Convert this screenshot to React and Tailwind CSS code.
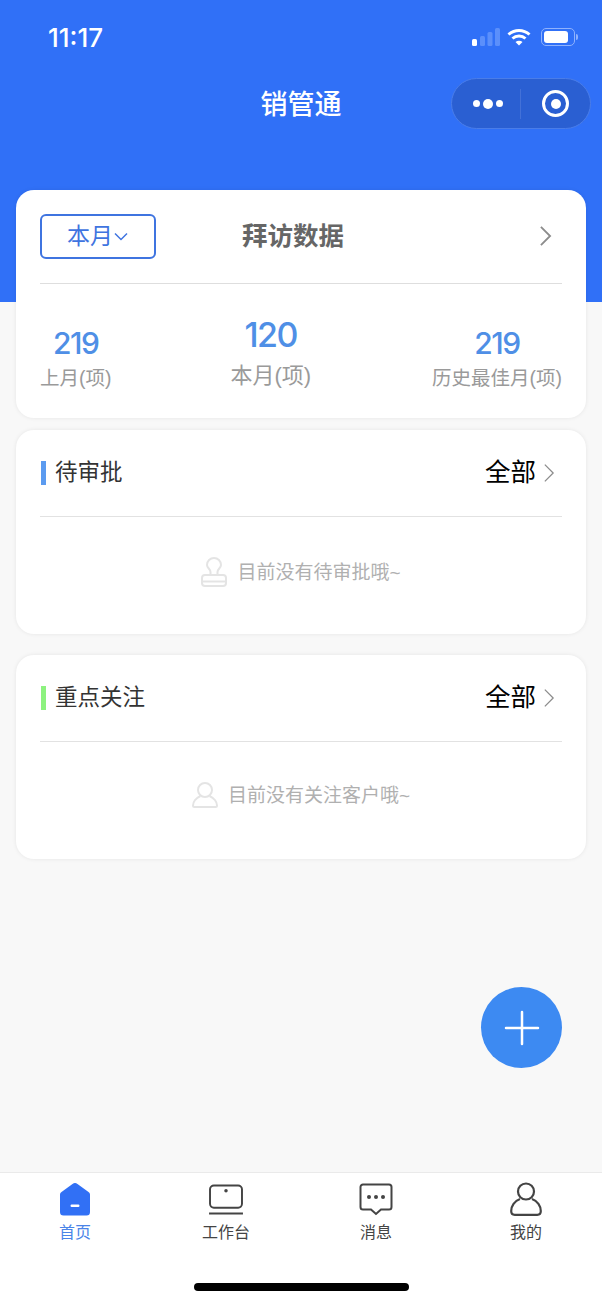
import React from "react";

const font = { fontFamily: '"Liberation Sans", "Noto Sans CJK SC", sans-serif' };

function Chevron({ className, thin }) {
  return (
    <svg viewBox="0 0 14 24" className={className} fill="none" stroke="currentColor" strokeWidth={thin ? 1.5 : 2}>
      <path d="M2 2l10 10L2 22" />
    </svg>
  );
}

function StatusBar() {
  return (
    <div className="flex h-[74px] items-center justify-between pl-[48px] pr-[24px] text-white">
      <span className="mt-[1px] font-['Inter'] text-[26px] leading-none font-medium">11:17</span>
      <div className="flex items-center gap-[7px]">
        <svg width="28" height="18" viewBox="0 0 28 18">
          <rect x="0" y="11" width="5" height="7" rx="1.5" fill="#fff" />
          <rect x="8" y="8" width="5" height="10" rx="1.5" fill="#5b8ffb" />
          <rect x="15.5" y="4" width="5" height="14" rx="1.5" fill="#5b8ffb" />
          <rect x="23" y="0" width="5" height="18" rx="1.5" fill="#5b8ffb" />
        </svg>
        <svg width="24" height="18" viewBox="0 0 24 18" className="mr-[3px]" fill="none" stroke="#fff" strokeWidth="3">
          <path d="M1.5 6.5C7.5 1 16.5 1 22.5 6.5" />
          <path d="M5.5 10.5c3.7-3.3 9.3-3.3 13 0" />
          <path d="M12 17.5l-3.5-3.6c2-1.6 5-1.6 7 0z" fill="#fff" stroke="none" />
        </svg>
        <div className="flex items-center">
          <div className="flex h-[18px] w-[34px] items-center rounded-[5px] border border-[#8fb2fd] p-[2px]">
            <div className="h-full w-[24px] rounded-[3px] bg-white" />
          </div>
          <div className="ml-[1px] h-[6px] w-[2px] rounded-r-full bg-[#8fb2fd]" />
        </div>
      </div>
    </div>
  );
}

function NavBar() {
  return (
    <div className="relative flex h-[60px] items-center justify-center">
      <span className="mt-[2px] text-[27px] leading-none font-medium text-white">销管通</span>
      <div className="absolute top-[4px] right-[11px] flex h-[51px] w-[140px] items-center rounded-full border border-[#4a7de8] bg-[#2a5fd2]">
        <div className="flex flex-1 items-center justify-center gap-[3px] pl-[3px]">
          <span className="h-[7px] w-[7px] rounded-full bg-white" />
          <span className="h-[10px] w-[10px] rounded-full bg-white" />
          <span className="h-[7px] w-[7px] rounded-full bg-white" />
        </div>
        <div className="h-[30px] w-px bg-[#4371d8]" />
        <div className="flex w-[69px] items-center justify-center">
          <div className="flex h-[27px] w-[27px] items-center justify-center rounded-full border-[3px] border-white">
            <span className="h-[10px] w-[10px] rounded-full bg-white" />
          </div>
        </div>
      </div>
    </div>
  );
}

function Stat({ value, label, big }) {
  return (
    <div className={`flex flex-col items-center ${big ? "-mt-[11px]" : "-mt-[1px]"}`}>
      <span className={`${big ? "text-[34px] leading-[40px]" : "text-[30px] leading-[36px]"} font-['Inter'] font-medium tracking-[-1.5px] text-[#4f8fe6]`}>{value}</span>
      <span className={`${big ? "mt-[7px] text-[22px]" : "mt-[3px] text-[19.500px]"} leading-[28px] text-[#9a9a9a]`}>{label}</span>
    </div>
  );
}

function VisitCard() {
  return (
    <div className="h-[228px] rounded-[18px] bg-white px-[24px] shadow-[0_0_4px_rgba(0,0,0,0.08)]">
      <div className="flex h-[94px] items-center border-b border-[#dedede] pb-[1px]">
        <div className="flex h-[45px] w-[116px] items-center justify-center gap-[1px] rounded-[6px] border-2 border-[#3f74e0] pr-[1px] text-[#3f74e0]">
          <span className="mt-[1px] text-[23px] leading-none">本月</span>
          <svg width="14" height="9" viewBox="0 0 14 9" fill="none" stroke="currentColor" strokeWidth="1.5" className="mt-[1px]">
            <path d="M1 1.5l6 6 6-6" />
          </svg>
        </div>
        <span className="mt-[1px] ml-[86px] flex-1 text-[25.500px] leading-none font-bold text-[#666666]">拜访数据</span>
        <Chevron className="mr-[10px] h-[22px] w-[13px] text-[#8c8c8c]" />
      </div>
      <div className="flex items-start justify-between pt-[42px]">
        <Stat value="219" label="上月(项)" />
        <div className="ml-[-2px]"><Stat value="120" label="本月(项)" big /></div>
        <Stat value="219" label="历史最佳月(项)" />
      </div>
    </div>
  );
}

function StampIcon() {
  return (
    <svg width="26" height="30" viewBox="0 0 26 30" fill="none" stroke="#e4e4e4" strokeWidth="2">
      <path d="M9.500 18v-3C9.500 12 6 11 6 8a7 7 0 0 1 14 0c0 3-3.500 4-3.500 7v3" />
      <rect x="1" y="18" width="24" height="11" rx="3" />
      <path d="M1 24.500h24" />
    </svg>
  );
}

function PersonIcon() {
  return (
    <svg width="26" height="26" viewBox="0 0 26 26" fill="none" stroke="#e4e4e4" strokeWidth="2">
      <circle cx="13" cy="8" r="7" />
      <path d="M8.500 14C4 16 1 20 1 23.500c0 1 .5 1.500 1.500 1.500h21c1 0 1.500-.5 1.500-1.500 0-3.500-3-7.500-7.500-9.500" />
    </svg>
  );
}

function ListCard({ title, barColor, icon, empty, className }) {
  return (
    <div className={`h-[204px] rounded-[18px] bg-white px-[24px] shadow-[0_0_4px_rgba(0,0,0,0.08)] ${className}`}>
      <div className="flex h-[87px] items-center justify-between border-b border-[#e2e2e2]">
        <div className="flex items-center">
          <span className={`ml-[1px] h-[24px] w-[5px] ${barColor}`} />
          <span className="mt-[1px] ml-[9px] text-[22.500px] leading-none text-[#333333]">{title}</span>
        </div>
        <div className="flex items-center">
          <span className="text-[25.500px] leading-none text-black">全部</span>
          <Chevron thin className="mr-[7px] ml-[7px] h-[20px] w-[12px] text-[#8c8c8c]" />
        </div>
      </div>
      <div className="flex items-center justify-center gap-[10px] pt-[40px]">
        {icon}
        <span className="text-[19px] leading-none text-[#b0b0b0]">{empty}</span>
      </div>
    </div>
  );
}

function TabItem({ icon, label, active, className }) {
  return (
    <div className={`flex w-[150px] flex-col items-center ${className || ""}`}>
      <div className="flex h-[33px] items-end">{icon}</div>
      <span className={`mt-[7px] text-[16px] leading-[20px] ${active ? "text-[#4a84e8]" : "text-[#444444]"}`}>{label}</span>
    </div>
  );
}

function TabBar() {
  return (
    <div className="h-[132px] border-t border-[#eaeaea] bg-white">
      <div className="flex justify-center pt-[10px]">
        <TabItem
          active
          className="-translate-x-px"
          label="首页"
          icon={
            <svg width="30" height="33" viewBox="0 0 30 33">
              <path d="M12.500 1a4 4 0 0 1 5 0l11 8a3 3 0 0 1 1.500 2.500V29a3.500 3.500 0 0 1-3.500 3.500h-23A3.500 3.500 0 0 1 0 29V11.500A3 3 0 0 1 1.500 9z" fill="#3170f5" />
              <rect x="10.500" y="21.500" width="9" height="2.500" rx="1.200" fill="#fff" />
            </svg>
          }
        />
        <TabItem
          label="工作台"
          icon={
            <svg width="36" height="31" viewBox="0 0 36 32" fill="none" stroke="#444" strokeWidth="2" className="mb-[1px]">
              <rect x="1.500" y="1.500" width="33" height="23" rx="4" />
              <path d="M0.500 30.500h35" />
              <circle cx="18" cy="7" r="1.800" fill="#444" stroke="none" />
            </svg>
          }
        />
        <TabItem
          label="消息"
          icon={
            <svg width="34" height="33" viewBox="0 0 34 33" fill="none" stroke="#444" strokeWidth="2">
              <path d="M4 1.500h26a2.500 2.500 0 0 1 2.500 2.500v20a2.500 2.500 0 0 1-2.500 2.500h-8l-5 4.500-5-4.500H4A2.500 2.500 0 0 1 1.500 24V4A2.500 2.500 0 0 1 4 1.500z" />
              <circle cx="10" cy="14" r="2" fill="#444" stroke="none" />
              <circle cx="17" cy="14" r="2" fill="#444" stroke="none" />
              <circle cx="24" cy="14" r="2" fill="#444" stroke="none" />
            </svg>
          }
        />
        <TabItem
          label="我的"
          icon={
            <svg width="32" height="34" viewBox="0 0 32 34" fill="none" stroke="#444" strokeWidth="2.200">
              <circle cx="16" cy="9.500" r="8" />
              <path d="M10 17C4.500 19 1.200 24 1.200 29c0 2.500 1.300 3.800 3.500 3.800h22.600c2.200 0 3.500-1.300 3.500-3.800 0-5-3.300-10-8.800-12" />
            </svg>
          }
        />
      </div>
      <div className="mx-auto mt-[40px] h-[8px] w-[215px] rounded-full bg-black" />
    </div>
  );
}

export default function App() {
  return (
    <div style={font} className="relative flex min-h-[1304px] flex-col bg-[#f8f8f8]">
      <div className="h-[302px] bg-[#3070f7]">
        <StatusBar />
        <NavBar />
      </div>
      <div className="-mt-[112px] flex-1 px-[16px]">
        <VisitCard />
        <ListCard
          className="mt-[12px]"
          title="待审批"
          barColor="bg-[#5b9bf0]"
          icon={<StampIcon />}
          empty="目前没有待审批哦~"
        />
        <ListCard
          className="mt-[21px]"
          title="重点关注"
          barColor="bg-[#8df27f]"
          icon={<PersonIcon />}
          empty="目前没有关注客户哦~"
        />
      </div>
      <div className="absolute top-[987px] left-[481px] flex h-[81px] w-[81px] items-center justify-center rounded-full bg-[#3d8af2]">
        <svg width="36" height="36" viewBox="0 0 36 36" stroke="#fff" strokeWidth="2.500" strokeLinecap="round">
          <path d="M18 2v32M2 18h32" />
        </svg>
      </div>
      <TabBar />
    </div>
  );
}
